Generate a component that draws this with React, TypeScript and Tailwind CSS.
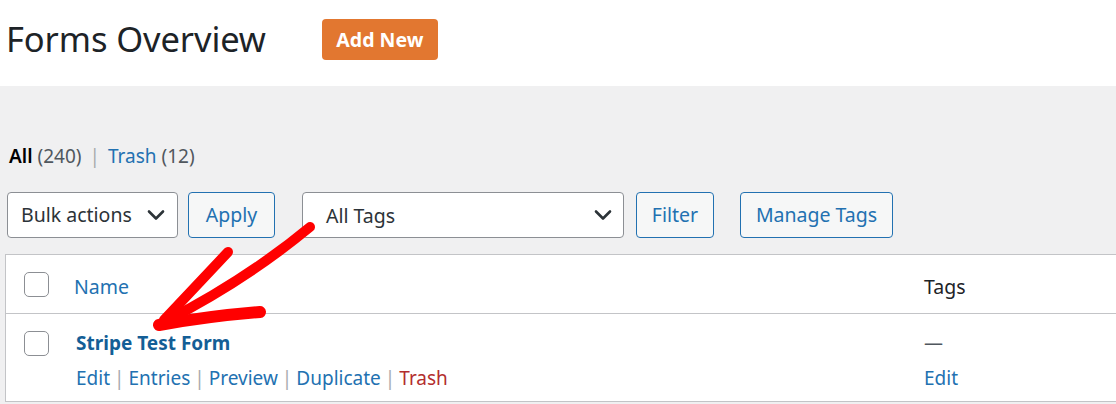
import React from "react";

const font = { fontFamily: '"Noto Sans", "Open Sans", sans-serif' };

const Chevron = () => (
  <svg width="18" height="12" viewBox="0 0 18 12" fill="none">
    <path d="M2 2.5l7 7 7-7" stroke="#2c3338" strokeWidth="2.6" strokeLinecap="round" strokeLinejoin="round" />
  </svg>
);

const Checkbox = () => (
  <span className="block w-[25px] h-[25px] rounded-[5px] border-[1.5px] border-[#8c8f94] bg-white" />
);

const Sep = ({ gap = "px-[4px]" }: { gap?: string }) => <span className={`text-[#a7aaad] ${gap}`}>|</span>;

export default function App() {
  return (
    <div className="relative w-[1116px] h-[404px] overflow-hidden bg-[#f0f0f1]" style={font}>
      {/* Header */}
      <div className="h-[86px] bg-white flex items-center pl-[6px]">
        <h1 className="text-[34.5px] leading-none text-[#1d2327] font-normal tracking-[-0.1px] -mt-[8px]">Forms Overview</h1>
        <button className="ml-[56px] -mt-[7px] w-[116px] h-[41px] rounded-[4px] bg-[#e27730] text-white text-[19.5px] font-bold">
          Add New
        </button>
      </div>

      {/* Status links */}
      <div className="pt-[57px] pl-[9px] text-[19px] leading-[26px] text-[#50575e]">
        <span className="text-black font-semibold">All</span> (240)
        <Sep gap="px-[8px]" />
        <span className="text-[#2271b1]">Trash</span> (12)
      </div>

      {/* Controls */}
      <div className="flex items-center mt-[23px] pl-[7px] h-[46px] text-[19.5px]">
        <div className="w-[171px] h-[46px] bg-white border border-[#8c8f94] rounded-[4px] flex items-center justify-between pl-[13px] pr-[12px] text-[#2c3338]">
          <span>Bulk actions</span>
          <Chevron />
        </div>
        <button className="ml-[10px] w-[87px] h-[46px] bg-[#f6f7f7] border border-[#2271b1] rounded-[4px] text-[#2271b1]">
          Apply
        </button>
        <div className="ml-[27px] w-[322px] h-[46px] bg-white border border-[#8c8f94] rounded-[4px] flex items-center justify-between pl-[23px] pr-[11px] text-[#2c3338]">
          <span className="mt-[2px]">All Tags</span>
          <Chevron />
        </div>
        <button className="ml-[12px] w-[78px] h-[46px] bg-[#f6f7f7] border border-[#2271b1] rounded-[4px] text-[#2271b1]">
          Filter
        </button>
        <button className="ml-[26px] w-[153px] h-[46px] bg-[#f6f7f7] border border-[#2271b1] rounded-[4px] text-[#2271b1]">
          Manage Tags
        </button>
      </div>

      {/* Table */}
      <div className="mt-[16px] ml-[5px] w-[1130px] bg-white border border-[#c3c4c7] text-[19px]">
        <div className="flex items-center h-[59px] border-b border-[#c3c4c7] text-[19.5px]">
          <div className="w-[59px] flex justify-center pl-[2px]">
            <Checkbox />
          </div>
          <div className="w-[859px] pl-[9px] pt-[5px] text-[#2271b1]">Name</div>
          <div className="pt-[5px] text-[#1d2327]">Tags</div>
        </div>
        <div className="flex pt-[17px] pb-[10px]">
          <div className="w-[59px] flex justify-center pl-[2px]">
            <Checkbox />
          </div>
          <div className="w-[859px] pl-[11px]">
            <div className="font-bold text-[#135e96] leading-[26px] -mt-[1px]">Stripe Test Form</div>
            <div className="mt-[9px] leading-[26px] text-[#2271b1]">
              Edit<Sep />Entries<Sep />Preview<Sep />Duplicate<Sep />
              <span className="text-[#b32d2e]">Trash</span>
            </div>
          </div>
          <div>
            <div className="leading-[26px] text-[#50575e] -mt-[1px]">—</div>
            <div className="mt-[9px] leading-[26px] text-[#2271b1]">Edit</div>
          </div>
        </div>
      </div>

      {/* Hand-drawn arrow annotation */}
      <svg className="absolute top-0 left-0 pointer-events-none" width="1116" height="404" viewBox="0 0 1116 404">
        <g stroke="#ff0000" strokeLinecap="round" strokeLinejoin="round" fill="none">
          <path d="M228 252 L164 320" strokeWidth="10" />
          <path d="M310 227 Q 246 280 164 322" strokeWidth="10" />
          <path d="M159 325 Q 210 316 260 312" strokeWidth="12" />
        </g>
      </svg>
    </div>
  );
}
